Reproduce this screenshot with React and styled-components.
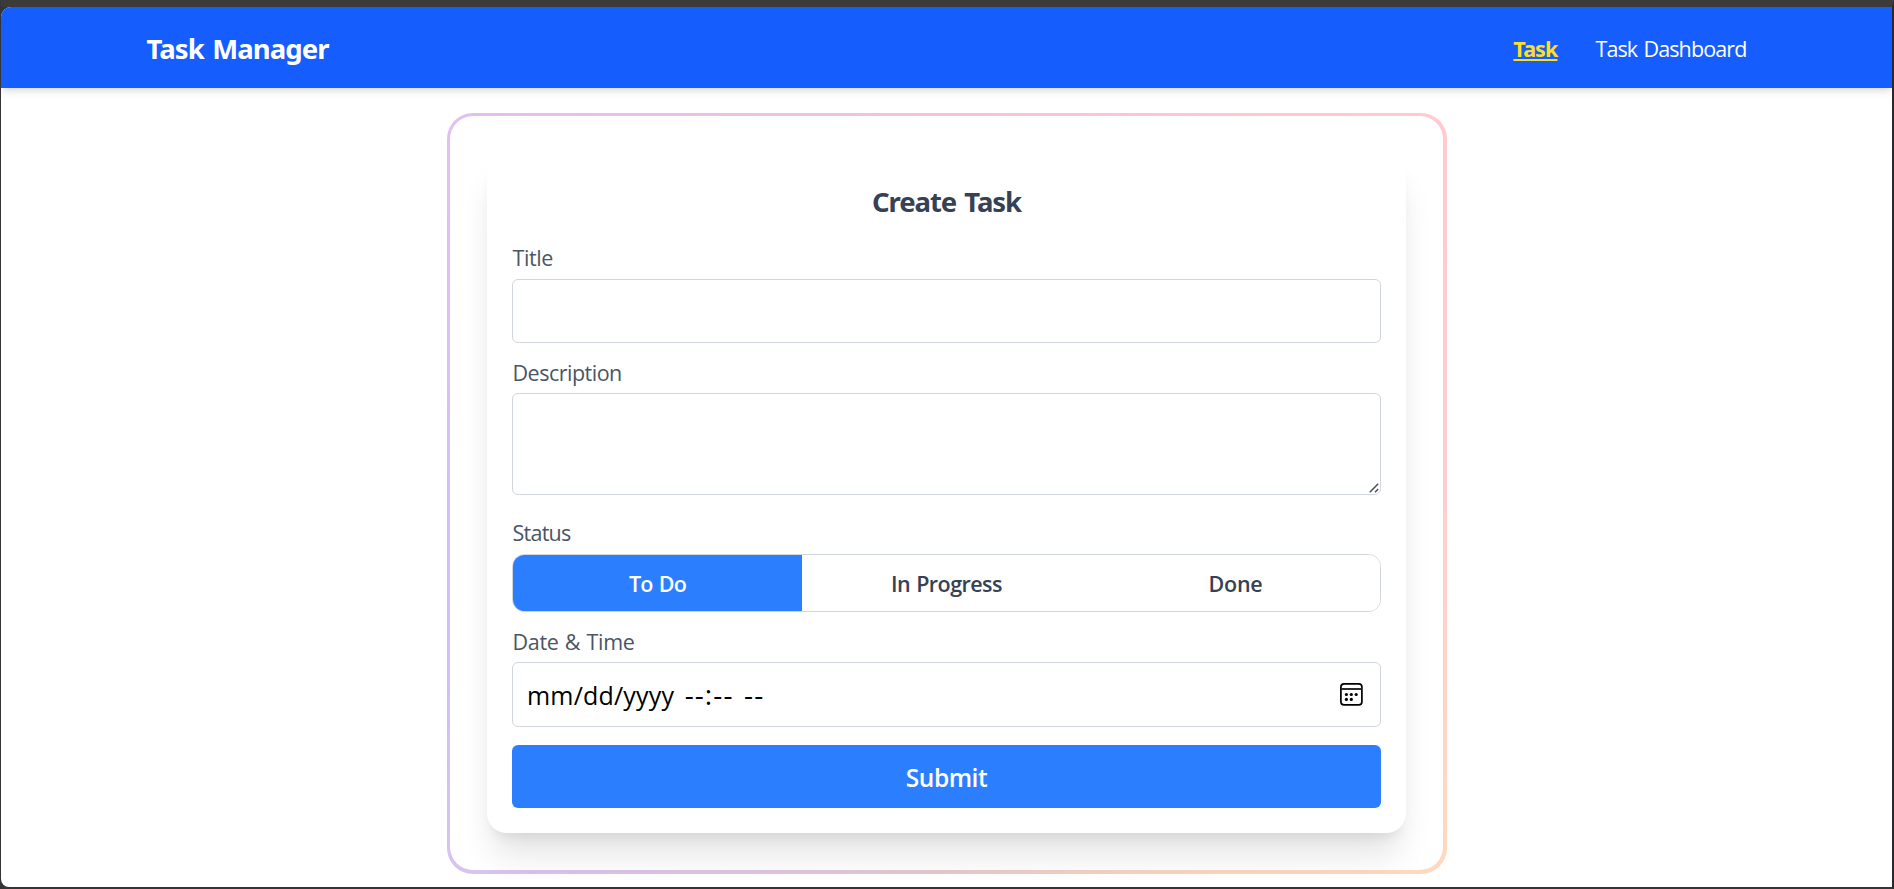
import React, { useState } from "react";
import styled, { createGlobalStyle } from "styled-components";

const GlobalStyle = createGlobalStyle`
  *, *::before, *::after { box-sizing: border-box; }
  body {
    margin: 0;
    overflow: hidden;
    font-family: "Open Sans", "Noto Sans", sans-serif;
    background: #3a3a3a;
  }
`;

const Window = styled.div`
  height: 100vh;
  border-style: solid;
  border-width: 7px 2px 2px 1px;
  border-color: #3b3b3b #29292b #343335 #343436;
  background: #343436;
`;

const Page = styled.div`
  height: 100%;
  overflow: hidden;
  background: #ffffff;
  border-radius: 10px 0 0 8px;
`;

const Navbar = styled.header`
  height: 81px;
  padding-top: 2px;
  display: flex;
  justify-content: center;
  background: #155dfc;
  box-shadow: 0 5px 7.5px -1px rgba(0, 0, 0, 0.1), 0 2.5px 5px -2.5px rgba(0, 0, 0, 0.1);
`;

const NavInner = styled.div`
  width: 1600px;
  display: flex;
  align-items: center;
  justify-content: space-between;
`;

const Brand = styled.div`
  font-family: "Noto Sans", sans-serif;
  font-size: 27.5px;
  line-height: 38px;
  font-weight: 700;
  letter-spacing: -0.9px;
  word-spacing: 2px;
  color: #ffffff;
`;

const NavLinks = styled.nav`
  display: flex;
  gap: 38px;
  padding-top: 1px;
`;

const NavLink = styled.a`
  font-family: ${(p) => (p.$active ? '"Noto Sans", sans-serif' : "inherit")};
  font-size: 21.5px;
  line-height: 30px;
  font-weight: ${(p) => (p.$active ? 700 : 400)};
  letter-spacing: ${(p) => (p.$active ? "-0.9px" : "-0.88px")};
  word-spacing: 1.5px;
  color: ${(p) => (p.$active ? "#ffdf20" : "#ffffff")};
  text-decoration: ${(p) => (p.$active ? "underline" : "none")};
  text-decoration-thickness: 2px;
  text-underline-offset: 2px;
  text-decoration-skip-ink: none;
`;

const Main = styled.main`
  display: flex;
  justify-content: center;
  padding: 25px 0 0 1px;
`;

const GradientFrame = styled.section`
  width: 1000px;
  height: 761px;
  padding: 3px 4px 4px 3px;
  border-radius: 26px;
  background: conic-gradient(
    #f5c2dc 0deg,
    #ffcad2 50deg,
    #ffcdd1 90deg,
    #ffd9bf 128deg,
    #f6d5c0 150deg,
    #e4c8cf 182deg,
    #d9c3ef 230deg,
    #cfbffb 256deg,
    #dabff6 280deg,
    #e2bff0 307deg,
    #f5c2dc 360deg
  );
`;

const FrameBody = styled.div`
  height: 100%;
  padding: 38px 37px 37px;
  border-radius: 23px;
  background: #ffffff;
`;

const Card = styled.form`
  height: 100%;
  padding: 25px;
  border-radius: 20px;
  background: #ffffff;
  display: flex;
  flex-direction: column;
  box-shadow: 0 27px 34px -6px rgba(0, 0, 0, 0.11), 0 10px 12.5px -7.5px rgba(0, 0, 0, 0.09);
`;

const Heading = styled.h2`
  margin: 0 0 19px;
  font-family: "Noto Sans", sans-serif;
  font-size: 27.5px;
  line-height: 45px;
  font-weight: 700;
  letter-spacing: -1.05px;
  word-spacing: 2px;
  text-align: center;
  color: #364153;
`;

const Field = styled.div`
  display: flex;
  flex-direction: column;
  gap: ${(p) => p.$gap}px;
  margin-bottom: ${(p) => p.$after}px;
`;

const Label = styled.label`
  padding-left: 0.5px;
  font-size: 21.5px;
  line-height: 30px;
  letter-spacing: ${(p) => p.$tracking || 0}px;
  word-spacing: 1px;
  color: #4a5565;
`;

const TextInput = styled.input`
  width: 100%;
  height: 64px;
  padding: 0 15px;
  border: 1px solid #d1d5dc;
  border-radius: 6px;
  background: #ffffff;
  font: 400 24px "Open Sans", sans-serif;
  outline: none;
`;

const AreaWrap = styled.div`
  position: relative;
  height: 102px;
`;

const TextArea = styled.textarea`
  display: block;
  width: 100%;
  height: 100%;
  padding: 12px 15px;
  border: 1px solid #d1d5dc;
  border-radius: 6px;
  background: #ffffff;
  font: 400 24px "Open Sans", sans-serif;
  resize: none;
  outline: none;
`;

const Grip = styled.svg`
  position: absolute;
  right: 2px;
  bottom: 2px;
`;

const Segmented = styled.div`
  display: grid;
  grid-template-columns: repeat(3, 1fr);
  height: 58px;
  border: 1px solid #d1d5dc;
  border-radius: 12.5px;
  overflow: hidden;
`;

const Segment = styled.button`
  border: 0;
  padding: 0;
  font: 600 21.5px "Open Sans", sans-serif;
  letter-spacing: ${(p) => p.$tracking || 0}px;
  word-spacing: 1px;
  color: ${(p) => (p.$active ? "#ffffff" : "#364153")};
  background: ${(p) => (p.$active ? "#2b7fff" : "#ffffff")};
`;

const DateBox = styled.div`
  display: flex;
  align-items: center;
  justify-content: space-between;
  height: 65px;
  padding: 0 17px 0 14px;
  border: 1px solid #d1d5dc;
  border-radius: 6px;
  color: #000000;
`;

const DateParts = styled.div`
  display: flex;
  align-items: baseline;
  gap: 10.5px;
  padding-top: 1px;
  line-height: 38px;
  font-size: 25px;
  letter-spacing: 0.18px;
`;

const Dashes = styled.span`
  font-size: 28px;
  line-height: 1;
  letter-spacing: 1.1px;
`;

const CalendarSvg = styled.svg`
  margin-bottom: 1px;
`;

const Submit = styled.button`
  height: 63px;
  border: 0;
  padding: 1px 0 0;
  border-radius: 6px;
  background: #2b7fff;
  color: #ffffff;
  font: 600 24.5px "Open Sans", sans-serif;
  letter-spacing: -0.45px;
`;

function CalendarIcon() {
  return (
    <CalendarSvg width="23" height="23" viewBox="0 0 23 23" fill="none">
      <rect x="0.9" y="0.9" width="21" height="21" rx="3.2" stroke="#000" strokeWidth="1.7" />
      <path d="M1 6H22" stroke="#222" strokeWidth="1.9" />
      <g fill="#000">
        <circle cx="6.4" cy="11.5" r="1.6" />
        <circle cx="11.3" cy="11.5" r="1.6" />
        <circle cx="16.2" cy="11.5" r="1.6" />
        <circle cx="6.4" cy="16.4" r="1.6" />
        <circle cx="11.3" cy="16.4" r="1.6" />
      </g>
    </CalendarSvg>
  );
}

const STATUSES = [
  { name: "To Do", tracking: -0.7 },
  { name: "In Progress", tracking: -0.55 },
  { name: "Done", tracking: -0.2 },
];

export default function App() {
  const [status, setStatus] = useState("To Do");
  return (
    <Window>
      <GlobalStyle />
      <Page>
        <Navbar>
          <NavInner>
            <Brand>Task Manager</Brand>
            <NavLinks>
              <NavLink $active>Task</NavLink>
              <NavLink>Task Dashboard</NavLink>
            </NavLinks>
          </NavInner>
        </Navbar>
        <Main>
          <GradientFrame>
            <FrameBody>
              <Card onSubmit={(e) => e.preventDefault()}>
                <Heading>Create Task</Heading>
                <Field $gap={6} $after={15}>
                  <Label $tracking={-0.4}>Title</Label>
                  <TextInput type="text" />
                </Field>
                <Field $gap={5} $after={23}>
                  <Label $tracking={-0.5}>Description</Label>
                  <AreaWrap>
                    <TextArea />
                    <Grip width="10" height="10" viewBox="0 0 10 10" fill="none" stroke="#4d4d4d" strokeWidth="1.5">
                      <path d="M0.8 9.2L9.2 0.8M6 9.2L9.2 6" />
                    </Grip>
                  </AreaWrap>
                </Field>
                <Field $gap={6} $after={15}>
                  <Label $tracking={-0.75}>Status</Label>
                  <Segmented>
                    {STATUSES.map((s) => (
                      <Segment
                        key={s.name}
                        type="button"
                        $active={status === s.name}
                        $tracking={s.tracking}
                        onClick={() => setStatus(s.name)}
                      >
                        {s.name}
                      </Segment>
                    ))}
                  </Segmented>
                </Field>
                <Field $gap={5} $after={18}>
                  <Label $tracking={-0.3}>Date &amp; Time</Label>
                  <DateBox>
                    <DateParts>
                      <span>mm/dd/yyyy</span>
                      <Dashes>--:--</Dashes>
                      <Dashes>--</Dashes>
                    </DateParts>
                    <CalendarIcon />
                  </DateBox>
                </Field>
                <Submit type="submit">Submit</Submit>
              </Card>
            </FrameBody>
          </GradientFrame>
        </Main>
      </Page>
    </Window>
  );
}
